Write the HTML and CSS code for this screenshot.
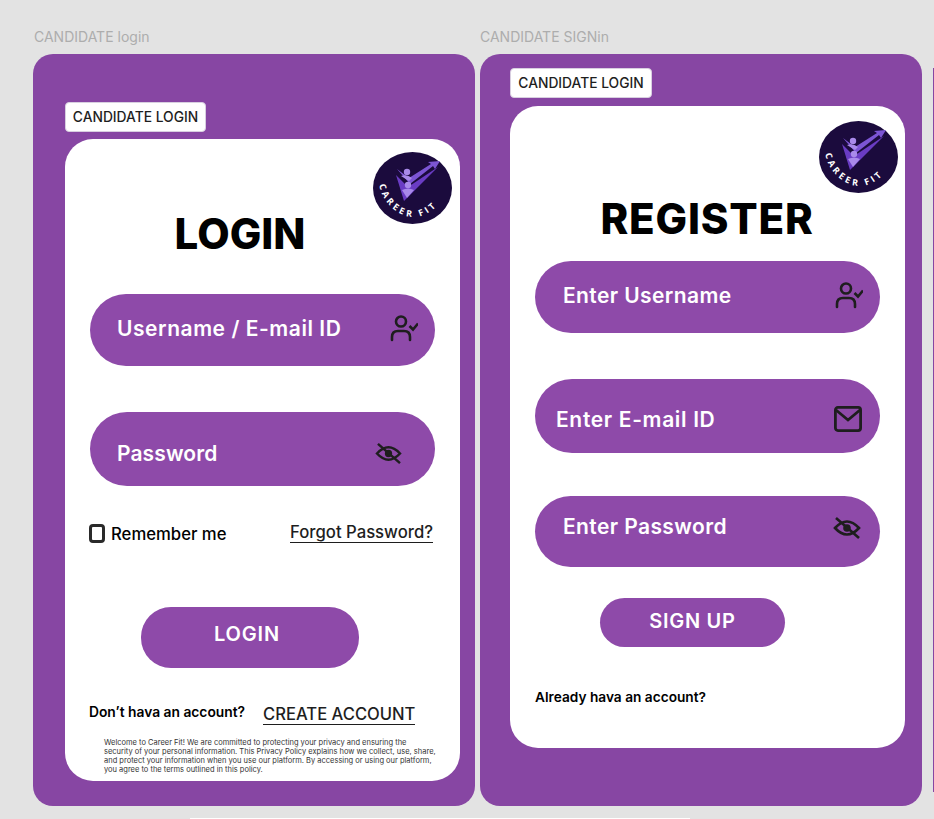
FILE: index.html

```html
<!DOCTYPE html>
<html lang="en">
<head>
  <meta charset="UTF-8">
  <meta name="viewport" content="width=device-width, initial-scale=1.0">
  <title>Candidate login</title>
  <link rel="stylesheet" href="styles.css">
</head>
<body>
  <svg width="0" height="0" class="defs">
    <defs>
      <symbol id="logo" viewBox="0 0 79 72">
        <ellipse cx="39.5" cy="36" rx="39.5" ry="36" fill="#1b0b3d"/>
        <path d="M24 17 L36 26 L58 12 L55 10 L67 9 L62 17 L60 14 L37 32 Z" fill="#7c55d4"/>
        <path d="M23 23 L35 35 L65 15 L31 49 Z" fill="#6a3cc4"/>
        <circle cx="34" cy="20" r="3.2" fill="#a98aea"/>
        <circle cx="35" cy="33" r="3.2" fill="#a98aea"/>
        <path d="M28 24 Q34 22 39 26 L36 29 Z" fill="#a98aea"/>
        <path d="M29 38 Q35 35 41 38 L34 46 Z" fill="#a98aea"/>
        <path id="logoArc" d="M6 32 C10 53 27 65 40 65 C55 65 72 52 76 28" fill="none"/>
        <text class="logo-text"><textPath href="#logoArc" startOffset="1">CAREER FIT</textPath></text>
      </symbol>
      <symbol id="userCheck" viewBox="0 0 28 28">
        <circle cx="11" cy="7.5" r="5" fill="none" stroke="#1e1e1e" stroke-width="2.6"/>
        <path d="M2 26 V23 Q2 17 8 17 H14 Q20 17 20 23 V26" fill="none" stroke="#1e1e1e" stroke-width="2.6" stroke-linecap="round"/>
        <path d="M19.5 12 L23 15.5 L28 9.5" fill="none" stroke="#1e1e1e" stroke-width="2.6"/>
      </symbol>
      <symbol id="eyeOff" viewBox="0 0 28 24">
        <path d="M2 12 Q14 -1 26 12 Q14 25 2 12 Z" fill="none" stroke="#1e1e1e" stroke-width="2.6"/>
        <circle cx="14" cy="12" r="3.8" fill="#1e1e1e"/>
        <path d="M3 2 L26 22" fill="none" stroke="#1e1e1e" stroke-width="2.6"/>
      </symbol>
      <symbol id="mail" viewBox="0 0 28 26">
        <rect x="1.4" y="1.4" width="25.2" height="23.2" rx="2.5" fill="none" stroke="#1e1e1e" stroke-width="2.8"/>
        <path d="M2 4 L14 14 L26 4" fill="none" stroke="#1e1e1e" stroke-width="2.8"/>
      </symbol>
    </defs>
  </svg>

  <div class="board">
    <!-- login frame -->
    <section class="frame">
      <h3 class="frame-name">CANDIDATE login</h3>
      <div class="panel panel-login">
        <div class="tag">CANDIDATE LOGIN</div>
        <div class="card card-login">
          <svg class="logo"><use href="#logo"/></svg>
          <h1 class="title title-login">LOGIN</h1>
          <div class="field field-a">
            <span>Username / E-mail ID</span>
            <svg class="icon icon-user"><use href="#userCheck"/></svg>
          </div>
          <div class="field field-b">
            <span>Password</span>
            <svg class="icon icon-eye"><use href="#eyeOff"/></svg>
          </div>
          <div class="options">
            <label class="remember"><i class="box"></i>Remember me</label>
            <a class="forgot">Forgot Password?</a>
          </div>
          <button class="btn btn-login">LOGIN</button>
          <div class="account">
            <span class="account-q">Don’t hava an account?</span>
            <a class="create">CREATE ACCOUNT</a>
          </div>
          <p class="policy">Welcome to Career Fit! We are committed to protecting your privacy and ensuring the<br>security of your personal information. This Privacy Policy explains how we collect, use, share,<br>and protect your information when you use our platform. By accessing or using our platform,<br>you agree to the terms outlined in this policy.</p>
        </div>
      </div>
    </section>

    <!-- register frame -->
    <section class="frame">
      <h3 class="frame-name frame-name-b">CANDIDATE SIGNin</h3>
      <div class="panel panel-register">
        <div class="tag">CANDIDATE LOGIN</div>
        <div class="card card-register">
          <svg class="logo"><use href="#logo"/></svg>
          <h1 class="title title-register">REGISTER</h1>
          <div class="field field-c">
            <span>Enter Username</span>
            <svg class="icon icon-user"><use href="#userCheck"/></svg>
          </div>
          <div class="field field-d">
            <span>Enter E-mail ID</span>
            <svg class="icon icon-mail"><use href="#mail"/></svg>
          </div>
          <div class="field field-e">
            <span>Enter Password</span>
            <svg class="icon icon-eye2"><use href="#eyeOff"/></svg>
          </div>
          <button class="btn btn-signup">SIGN UP</button>
          <p class="already">Already hava an account?</p>
        </div>
      </div>
    </section>

    <div class="next-frame"></div>
  </div>
  <div class="sheet"></div>
</body>
</html>
```

FILE: styles.css

```css
* { box-sizing: border-box; }
html, body { margin: 0; height: 819px; overflow: hidden; }
body { font-family: Inter, "Liberation Sans", sans-serif; background-color: #e3e3e3; color: #000; }
.defs { display: block; height: 0; }

.board { display: flex; gap: 5px; height: 818px; padding: 28px 0 0 33px; }
.frame { width: 442px; flex: none; }
.frame-name { margin: 0 0 8px 1px; height: 18px; font-size: 14px; line-height: 18px; font-weight: 400; color: #adadad; }
.frame-name-b { margin-left: 0; }
.next-frame { flex: none; width: 10px; height: 724px; margin: 40px 0 0 6px; background-color: #8746a3; }
.sheet { width: 500px; height: 1px; margin-left: 190px; background: #fff; }

.panel { background-color: #8746a3; border-radius: 20px; height: 752px; padding-left: 32px; }
.panel-login { padding-top: 48px; }
.panel-register { padding-top: 14px; padding-left: 30px; }

.tag { width: 141px; height: 30px; background: #fff; border-radius: 4px; border: 1px solid #d8cfe0; font-size: 13.8px; font-weight: 500; line-height: 28px; text-align: center; color: #1e1e1e; }
.panel-register .tag { width: 142px; }

.card { position: relative; width: 395px; height: 642px; background: #fff; border-radius: 28px; }
.card-login { margin-top: 7px; padding: 0 25px; }
.card-register { margin-top: 8px; padding: 0 25px; }

.logo { position: absolute; top: 13px; left: 308px; width: 79px; height: 72px; }
.card-register .logo { top: 15px; left: 309px; }
.logo-text { font-family: "Open Sans", sans-serif; font-size: 9px; font-weight: 700; letter-spacing: 2.9px; fill: #fff; }

.title { margin: 0; font-weight: 800; text-align: center; line-height: 48px; font-size: 42px; letter-spacing: 0; }
.title-login { padding: 71px 0 0; margin-right: 45px; }
.title-register { padding: 89px 0 0; margin-left: -1px; letter-spacing: 0.8px; }

.field { display: flex; justify-content: space-between; align-items: center; width: 345px; background-color: #8e4aa9; border-radius: 37px; color: #fff; font-size: 21px; font-weight: 600; letter-spacing: 0.4px; }
.field-a { height: 72px; margin-top: 36px; padding: 0 17px 4px 27px; letter-spacing: 0.55px; }
.field-b { height: 74px; margin-top: 46px; padding: 8px 33px 0 27px; letter-spacing: 0.1px; }
.field-c { height: 72px; margin-top: 18px; padding: 0 17px 4px 28px; }
.field-d { height: 74px; margin-top: 46px; padding: 6px 18px 0 21px; letter-spacing: 0.66px; }
.field-e { height: 71px; margin-top: 43px; padding: 0 19px 10px 28px; }

.icon { display: block; flex: none; }
.icon-user { width: 28px; height: 28px; }
.icon-eye { width: 27px; height: 23px; }
.icon-eye2 { width: 28px; height: 24px; margin-top: 2px; }
.icon-mail { width: 28px; height: 26px; }

.options { display: flex; justify-content: space-between; align-items: center; width: 343px; margin-top: 35px; height: 24px; font-size: 16.7px; font-weight: 500; }
.remember { display: flex; align-items: center; gap: 6px; padding-top: 2px; margin-left: -1px; }
.box { display: block; width: 16px; height: 19px; border: 3px solid #2a2a2a; border-radius: 4px; margin-top: -2px; }
.forgot { color: #1e1e1e; border-bottom: 1.5px solid #1e1e1e; line-height: 19px; margin-top: 0; }

.btn { display: block; border: none; background-color: #8e4aa9; color: #fff; font-family: inherit; font-weight: 600; font-size: 20px; }
.btn-login { width: 218px; height: 61px; border-radius: 30px; margin: 62px 0 0 51px; padding: 0 6px 8px 0; letter-spacing: 0.8px; }
.btn-signup { width: 185px; height: 49px; border-radius: 25px; margin: 31px 0 0 65px; padding: 0 0 4px; letter-spacing: 0.7px; }

.account { display: flex; align-items: flex-start; margin-top: 35px; margin-left: -1px; height: 26px; }
.account-q { font-size: 13.8px; font-weight: 600; line-height: 18px; }
.create { margin-left: 18px; font-size: 16.6px; font-weight: 500; line-height: 19px; margin-top: 2px; color: #1e1e1e; border-bottom: 1.5px solid #1e1e1e; }

.policy { margin: 9px 0 0 14px; width: 340px; font-size: 7.5px; line-height: 9px; color: #333; white-space: nowrap; }
.already { margin: 41px 0 0; font-size: 13.7px; font-weight: 600; line-height: 18px; }
```
